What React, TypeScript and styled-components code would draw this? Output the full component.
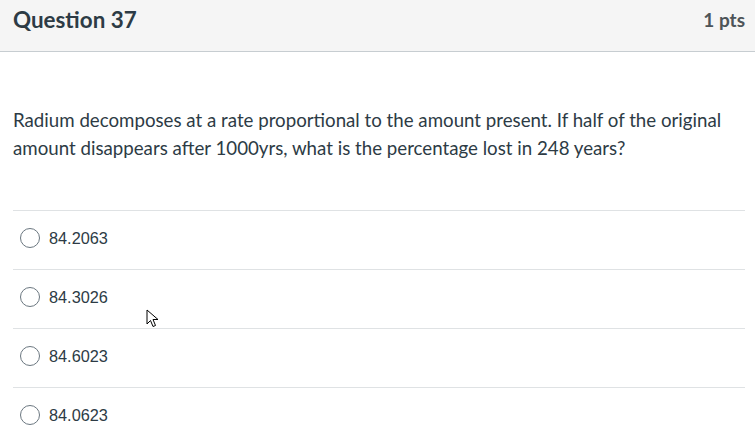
import React from "react";
import styled, { createGlobalStyle } from "styled-components";

const GlobalStyle = createGlobalStyle`
  html, body {
    margin: 0;
    padding: 0;
    background: #fff;
  }
  body {
    font-family: Lato, "Liberation Sans", sans-serif;
    color: #2d3b45;
  }
`;

const Page = styled.div`
  position: relative;
  width: 755px;
  height: 425px;
  overflow: hidden;
`;

const Header = styled.div`
  height: 52px;
  background: #f5f5f5;
  border-bottom: 1px solid #c7cdd1;
  display: flex;
  align-items: center;
  justify-content: space-between;
  padding: 0 10px 0 13px;
  box-sizing: border-box;

  h2 {
    margin: 0 0 12px;
    font-size: 22.4px;
    font-weight: 700;
    color: #2d3b45;
  }
`;

const Points = styled.div`
  margin-bottom: 12px;
  font-size: 19px;
  font-weight: 700;
  color: #4d5458;
`;

const Text = styled.p`
  margin: 54px 13px 0;
  font-size: 18.7px;
  line-height: 28px;
  color: #2d3b45;
`;

const Answers = styled.div`
  margin: 48px 10px 0 13px;
  border-top: 1px solid #dfe2e4;
`;

const Answer = styled.label`
  display: flex;
  align-items: center;
  gap: 9px;
  height: 54px;
  padding: 0 0 4px 7px;
  border-bottom: 1px solid #dfe2e4;
  font-family: "Liberation Sans", Arial, sans-serif;
  font-size: 16.3px;
  color: #2d3b45;
`;

const Radio = styled.span`
  width: 18px;
  height: 18px;
  border: 1px solid #6b7780;
  border-radius: 50%;
  background: #fff;
`;

const Cursor = styled.svg`
  position: absolute;
  left: 146px;
  top: 309px;
`;

const options = ["84.2063", "84.3026", "84.6023", "84.0623"];

export default function App() {
  return (
    <Page>
      <GlobalStyle />
      <Header>
        <h2>Question 37</h2>
        <Points>1 pts</Points>
      </Header>
      <Text>
        Radium decomposes at a rate proportional to the amount present. If half of the original
        amount disappears after 1000yrs, what is the percentage lost in 248 years?
      </Text>
      <Answers>
        {options.map((o) => (
          <Answer key={o}>
            <Radio />
            {o}
          </Answer>
        ))}
      </Answers>
      <Cursor width="14" height="20" viewBox="0 0 14 20">
        <path d="M1 1 L1 15 L4.5 11.5 L7 17.5 L9.5 16.5 L7 10.5 L12 10.5 Z" fill="#fff" stroke="#000" strokeWidth="1" strokeLinejoin="round" />
      </Cursor>
    </Page>
  );
}
